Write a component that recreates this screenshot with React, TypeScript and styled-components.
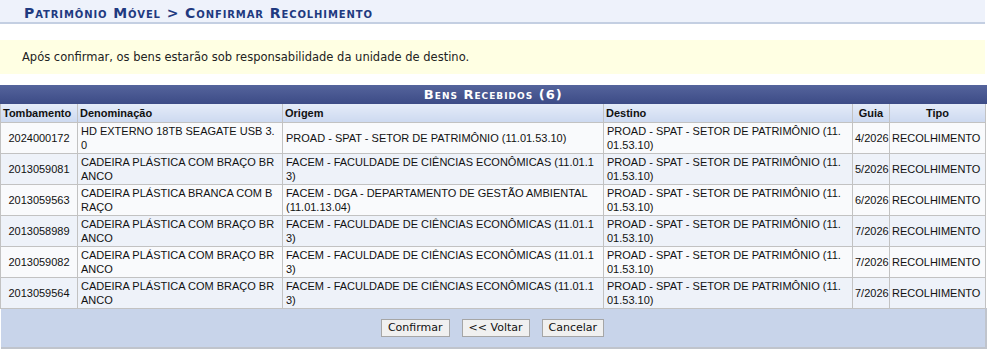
import styled, {createGlobalStyle} from "styled-components";

const GlobalStyle = createGlobalStyle`
    body {
        margin: 0;
        background: #ffffff;
        font-family: "DejaVu Sans", Verdana, sans-serif;
    }
`

const Page = styled.div`
    width: 985px;
`

const TitleBar = styled.h2`
    margin: 0;
    height: 22px;
    padding: 0 0 0 24px;
    background-color: #eef2fb;
    border-bottom: 2px solid #c4cfe2;
    color: #1f3a80;
    font-family: "DejaVu Sans", Verdana, sans-serif;
    font-size: 14px;
    font-weight: bold;
    font-variant: small-caps;
    letter-spacing: 0.9px;
    line-height: 26px;
`

const Message = styled.div`
    margin: 16px 0 11px 0;
    height: 34px;
    padding: 0 0 0 22px;
    background-color: #ffffe3;
    color: #222222;
    font-size: 11.5px;
    line-height: 34px;
`

const Table = styled.table`
    width: 985px;
    border-collapse: collapse;
    table-layout: fixed;
    font-family: "Liberation Sans", Arial, sans-serif;
    font-size: 11px;
`

const Caption = styled.caption`
    height: 19px;
    background: linear-gradient(#55649c, #3c4b86);
    color: #ffffff;
    font-family: "DejaVu Sans", Verdana, sans-serif;
    font-size: 13px;
    font-weight: bold;
    font-variant: small-caps;
    letter-spacing: 1px;
    line-height: 19px;
    text-align: center;
`

const HeadCell = styled.th<{ $align?: string }>`
    height: 18px;
    padding: 0 2px;
    background: linear-gradient(#e4ebf8, #cdd9f0);
    border: 1px solid #c2c2c2;
    border-top: none;
    color: #111111;
    font-family: "Liberation Sans", Arial, sans-serif;
    font-size: 11px;
    font-weight: bold;
    text-align: ${p => p.$align || "left"};
    white-space: nowrap;
`

const Row = styled.tr<{ $odd: boolean }>`
    background-color: ${p => p.$odd ? "#eef2f9" : "#f9fafc"};
`

const Cell = styled.td<{ $align?: string; $nowrap?: boolean; $pr?: number }>`
    height: 28px;
    padding: ${p => p.$nowrap ? "1px 2px" : `1px ${p.$pr ?? 5}px 1px 3px`};
    border: 1px solid #c2c2c2;
    color: #111111;
    font-family: "Liberation Sans", Arial, sans-serif;
    font-size: 11px;
    line-height: 14px;
    text-align: ${p => p.$align || "left"};
    vertical-align: middle;
    word-break: break-all;
    white-space: ${p => p.$nowrap ? "nowrap" : "normal"};
`

const Footer = styled.td`
    height: 38px;
    padding: 0;
    background-color: #c8d4ea;
    border-bottom: 2px solid #c0c4cc;
    border-right: 2px solid #c0c4cc;
    text-align: center;
    vertical-align: middle;
`

const Button = styled.button`
    height: 18px;
    margin: 0 6px;
    padding: 0 6px;
    background-color: #f0f0f0;
    border: 1px solid #a6a6a6;
    border-radius: 0;
    color: #111111;
    font-family: "DejaVu Sans", Verdana, sans-serif;
    font-size: 11px;
    line-height: 16px;
`

const rows = [
    ["2024000172", "HD EXTERNO 18TB SEAGATE USB 3.0", "PROAD - SPAT - SETOR DE PATRIMÔNIO (11.01.53.10)", "PROAD - SPAT - SETOR DE PATRIMÔNIO (11.01.53.10)", "4/2026"],
    ["2013059081", "CADEIRA PLÁSTICA COM BRAÇO BRANCO", "FACEM - FACULDADE DE CIÊNCIAS ECONÔMICAS (11.01.13)", "PROAD - SPAT - SETOR DE PATRIMÔNIO (11.01.53.10)", "5/2026"],
    ["2013059563", "CADEIRA PLÁSTICA BRANCA COM BRAÇO", "FACEM - DGA - DEPARTAMENTO DE GESTÃO AMBIENTAL (11.01.13.04)", "PROAD - SPAT - SETOR DE PATRIMÔNIO (11.01.53.10)", "6/2026"],
    ["2013058989", "CADEIRA PLÁSTICA COM BRAÇO BRANCO", "FACEM - FACULDADE DE CIÊNCIAS ECONÔMICAS (11.01.13)", "PROAD - SPAT - SETOR DE PATRIMÔNIO (11.01.53.10)", "7/2026"],
    ["2013059082", "CADEIRA PLÁSTICA COM BRAÇO BRANCO", "FACEM - FACULDADE DE CIÊNCIAS ECONÔMICAS (11.01.13)", "PROAD - SPAT - SETOR DE PATRIMÔNIO (11.01.53.10)", "7/2026"],
    ["2013059564", "CADEIRA PLÁSTICA COM BRAÇO BRANCO", "FACEM - FACULDADE DE CIÊNCIAS ECONÔMICAS (11.01.13)", "PROAD - SPAT - SETOR DE PATRIMÔNIO (11.01.53.10)", "7/2026"],
];

export default function App() {
    return (
        <Page>
            <GlobalStyle/>
            <TitleBar>Patrimônio Móvel &gt; Confirmar Recolhimento</TitleBar>
            <Message>Após confirmar, os bens estarão sob responsabilidade da unidade de destino.</Message>
            <Table>
                <Caption>Bens Recebidos (6)</Caption>
                <colgroup>
                    <col style={{width: 77}}/>
                    <col style={{width: 205}}/>
                    <col style={{width: 321}}/>
                    <col style={{width: 249}}/>
                    <col style={{width: 37}}/>
                    <col style={{width: 96}}/>
                </colgroup>
                <thead>
                    <tr>
                        <HeadCell>Tombamento</HeadCell>
                        <HeadCell>Denominação</HeadCell>
                        <HeadCell>Origem</HeadCell>
                        <HeadCell>Destino</HeadCell>
                        <HeadCell $align="center">Guia</HeadCell>
                        <HeadCell $align="center">Tipo</HeadCell>
                    </tr>
                </thead>
                <tbody>
                    {rows.map((r, i) => (
                        <Row key={r[0]} $odd={i % 2 === 1}>
                            <Cell $align="center" $nowrap>{r[0]}</Cell>
                            <Cell>{r[1]}</Cell>
                            <Cell>{r[2]}</Cell>
                            <Cell $pr={10}>{r[3]}</Cell>
                            <Cell $align="center" $nowrap>{r[4]}</Cell>
                            <Cell $nowrap>RECOLHIMENTO</Cell>
                        </Row>
                    ))}
                </tbody>
                <tfoot>
                    <tr>
                        <Footer colSpan={6}>
                            <Button>Confirmar</Button>
                            <Button>&lt;&lt; Voltar</Button>
                            <Button>Cancelar</Button>
                        </Footer>
                    </tr>
                </tfoot>
            </Table>
        </Page>
    )
}
